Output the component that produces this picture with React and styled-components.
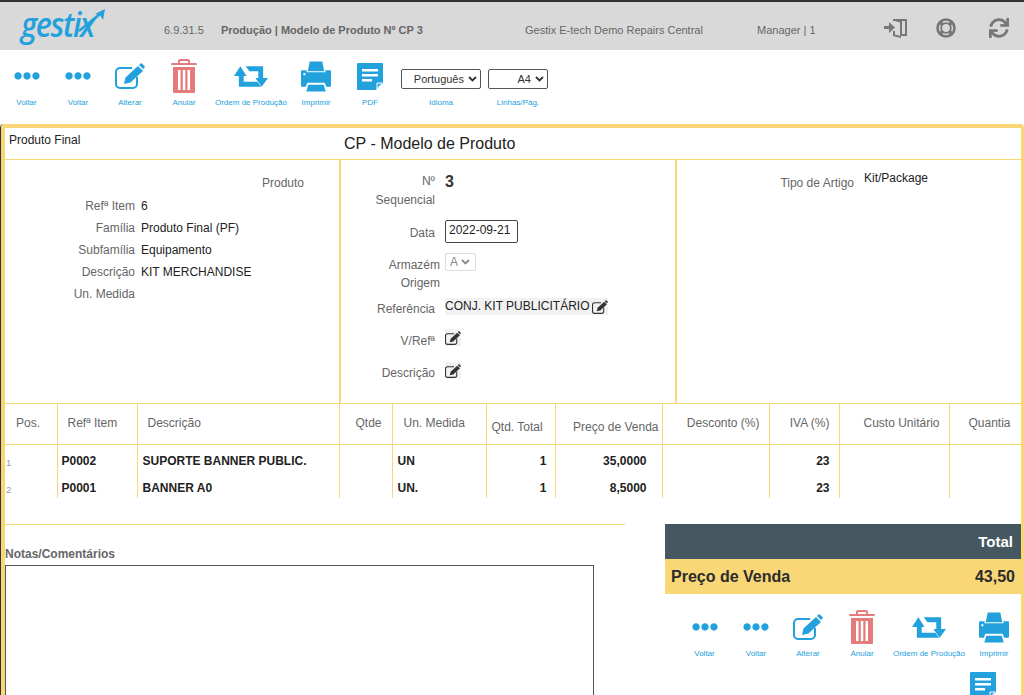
import React from "react";
import styled, { createGlobalStyle } from "styled-components";
import { FaEllipsisH, FaSync } from "react-icons/fa";

const Global = createGlobalStyle`
  html, body { margin: 0; padding: 0; height: 695px; overflow: hidden; background: #fff; }
  body { font-family: "Liberation Sans", Arial, sans-serif; color: #222; }
`;
const Page = styled.div`width: 1024px; height: 695px; overflow: hidden; display: flex; flex-direction: column;`;
const Header = styled.header`
  height: 48px; flex: none; border-top: 2px solid #333; background: #d9d9d9;
  display: flex; align-items: center; color: #666; font-size: 11px; position: relative;
`;
const Logo = styled.div`
  width: 164px; flex: none; padding-left: 21px; box-sizing: border-box; position: relative; height: 48px;
`;
const LogoText = styled.span`
  display: block; font: italic 600 35px/44px "Open Sans", sans-serif; letter-spacing: -1.5px; color: #22a1dc;
  transform: scaleX(.87); transform-origin: left;
`;
const LogoArrow = styled.svg`position: absolute; left: 78px; top: 6px;`;
const Version = styled.span`width: 57px; flex: none; padding-top: 7px;`;
const Title = styled.b`width: 304px; flex: none; padding-top: 7px; color: #666;`;
const Company = styled.span`width: 232px; flex: none; padding-top: 7px;`;
const User = styled.span`width: 127px; flex: none; padding-top: 7px;`;
const HeaderIcons = styled.div`display: flex; align-items: center; gap: 29px; color: #777; padding-top: 4px;`;
const SyncIcon = styled(FaSync)`margin-left: 4px;`;
const Toolbar = styled.div`
  height: ${p => p.$h || 74}px; flex: none; display: flex; align-items: flex-start;
  padding-left: ${p => p.$left || 0}px; margin-top: ${p => p.$top || 0}px; box-sizing: border-box;
`;
const Tool = styled.div`
  width: ${p => p.$w}px; flex: none; display: flex; flex-direction: column; align-items: center;
  color: #22a1dc; font-size: 8px;
`;
const IconSlot = styled.div`height: 34px; margin-top: 9px; margin-bottom: 2px; display: flex; align-items: center; justify-content: center;`;
const ToolLabel = styled.span`margin-top: 3px; white-space: nowrap; line-height: 10px;`;
const SelectBox = styled.div`
  width: ${p => p.$w}px; height: 20px; box-sizing: border-box; border: 1px solid #555; border-radius: 2px;
  display: flex; align-items: center; justify-content: flex-end; gap: 4px; padding-right: 3px;
  color: #333; font-size: 11px;
`;
const SelectCol = styled.div`
  width: ${p => p.$w}px; flex: none; display: flex; flex-direction: column; align-items: center; color: #22a1dc; font-size: 8px;
  margin-left: ${p => p.$ml || 0}px; padding-top: 19px;
`;
const SelectLabel = styled.span`margin-top: 9px; line-height: 10px;`;
const Panel = styled.main`
  flex: 1; border: solid #f9d777; border-width: 4px 3px 0 4px; border-radius: 4px 4px 0 0;
  box-shadow: -1px 0 0 #333; margin-left: 1px; min-height: 0; overflow: hidden;
`;
const TitleRow = styled.div`height: 31px; border-bottom: 1px solid #f9d777; display: flex;`;
const FinalTag = styled.span`font-size: 12px; padding: 5px 0 0 4px; width: 339px; box-sizing: border-box; flex: none; color: #222;`;
const DocTitle = styled.h1`margin: 0; font-size: 16px; font-weight: 400; line-height: 32px; color: #222;`;
const Columns = styled.div`display: flex; height: 243px; border-bottom: 1px solid #f9d777;`;
const Col = styled.section`
  box-sizing: border-box; width: ${p => p.$w}px; flex: none; border-right: ${p => p.$last ? 0 : "2px solid #f9d777"};
`;
const FormList = styled.div`padding-top: ${p => p.$top}px; display: flex; flex-direction: column;`;
const Field = styled.div`
  display: flex; height: ${p => p.$h || 22}px; font-size: 12px; line-height: 22px;
`;
const Label = styled.span`
  width: ${p => p.$w}px; flex: none; text-align: right; color: #666;
  padding-right: ${p => p.$pr ?? 6}px; box-sizing: border-box; line-height: ${p => p.$lh || 22}px; padding-top: ${p => p.$pt || 0}px;
`;
const Value = styled.span`color: #222; white-space: nowrap;`;
const TypeValue = styled(Value)`margin: -5px 0 0 4px;`;
const Seq = styled.b`font-size: 16px; color: #333; line-height: 18px; margin-top: 1px;`;
const DateBox = styled.div`
  width: 73px; height: 23px; box-sizing: border-box; border: 1px solid #444; border-radius: 2px;
  font-size: 12px; line-height: 19px; padding-left: 3px; color: #222; margin-top: 1px;
`;
const MiniSelect = styled.div`
  width: 31px; height: 18px; box-sizing: border-box; border: 1px solid #ddd; border-radius: 2px; color: #888; margin-top: 1px;
  display: flex; align-items: center; gap: 3px; padding-left: 4px; font-size: 12px;
`;
const Shade = styled.div`
  display: inline-flex; align-items: center; background: #f2f2f2; height: 17px; gap: 3px; color: #222; font-size: 12px; line-height: 17px;
`;
const Table = styled.table`
  border-collapse: collapse; table-layout: fixed; width: 1016px; font-size: 12px;
`;
const Th = styled.th`
  font-weight: 400; color: #666; height: 40px; box-sizing: border-box;
  padding: ${p => p.$low ? "6px" : "0"} ${p => p.$pr ?? 9}px ${p => p.$low ? "0" : "2px"} ${p => p.$pl ?? 0}px;
  border: solid #f9d777; border-width: 0 1px 1px 0;
  text-align: ${p => p.$a || "left"}; white-space: nowrap; vertical-align: middle;
`;
const Td = styled.td`
  font-weight: 700; color: #222; height: 27px; box-sizing: border-box;
  padding: 6px ${p => p.$pr ?? 4}px 0 ${p => p.$pl ?? 4}px; border-right: 1px solid #f9d777;
  text-align: ${p => p.$a || "left"}; white-space: nowrap;
`;
const PosCell = styled.td`
  font-size: 9.500px; color: #999; height: 27px; padding: 10px 0 0 1px; border-right: 1px solid #f9d777; box-sizing: border-box;
`;
const Bottom = styled.div`display: flex; justify-content: space-between; margin-top: 26px; align-items: flex-start;`;
const Notes = styled.div`width: 620px; flex: none; border-top: 1px solid #f9d777; padding-top: 22px;`;
const NotesLabel = styled.div`font-size: 12px; font-weight: 700; color: #666; line-height: 14px;`;
const NotesBox = styled.div`width: 589px; height: 200px; box-sizing: border-box; border: 1px solid #555; margin-top: 4px;`;
const Side = styled.div`width: 356px; flex: none;`;
const TotalHead = styled.div`
  height: 35px; background: #455760; color: #fff; font-weight: 700; font-size: 15px; display: flex; align-items: center; justify-content: flex-end; padding-right: 8px;
`;
const TotalRow = styled.div`
  height: 35px; background: #f9d777; color: #2b2b2b; font-weight: 700; font-size: 16px; display: flex; align-items: center; justify-content: space-between; padding: 0 6px;
`;
const PdfRow = styled.div`display: flex; justify-content: flex-end; padding-right: 25px;`;

const Blue = "#22a1dc";
const Dots = () => <FaEllipsisH size={26} color={Blue} />;
const Edit = ({ w = 30, h = 26, color = Blue }) => (
  <svg width={w} height={h} viewBox="0 0 30 26" fill={color}>
    <path d="M17 5H5a4 4 0 0 0-4 4v12a4 4 0 0 0 4 4h13a4 4 0 0 0 4-4v-7" fill="none" stroke={color} strokeWidth="2" />
    <path d="M9 21l1.500-6.500L23 3l5 5L15.500 19.500z" />
    <path d="M24 2l1.500-1.500a1 1 0 0 1 1.400 0l2.600 2.600a1 1 0 0 1 0 1.400L28 6z" />
  </svg>
);
const Trash = () => (
  <svg width="26" height="34" viewBox="0 0 26 34" fill="#e57b7b">
    <path d="M9 0h8a2 2 0 0 1 2 2v2h6a1 1 0 0 1 0 2H1a1 1 0 0 1 0-2h6V2a2 2 0 0 1 2-2zm0 2v2h8V2z" fillRule="evenodd" />
    <path d="M2 8h22v25a1 1 0 0 1-1 1H3a1 1 0 0 1-1-1zm5 3v20h2.500V11zm4.800 0v20h2.500V11zm4.700 0v20h2.500V11z" fillRule="evenodd" />
  </svg>
);
const Retweet = () => (
  <svg width="34" height="21" viewBox="0 0 35 21" fill={Blue}>
    <path d="M6.500 0L13 10H10V16H24L28 21H5V10H0Z" />
    <path d="M12 0H30V12H35L28.500 21L22 12H25V5H16Z" />
  </svg>
);
const Printer = () => (
  <svg width="30" height="31" viewBox="0 0 31 31" fill={Blue}>
    <path d="M9 0h13l2 10H7z" />
    <path fillRule="evenodd" d="M1 9h5l-.5 2h20l-.5-2h5a1 1 0 0 1 1 1v15a1 1 0 0 1-1 1h-4l-1.500-4H6.500L5 26H1a1 1 0 0 1-1-1V10a1 1 0 0 1 1-1zm2.500 3a1.200 1.200 0 1 0 0 2.400 1.200 1.200 0 0 0 0-2.400z" />
    <path d="M7.500 24h16l2 7H5.500z" />
  </svg>
);
const Doc = () => (
  <svg width="26" height="27" viewBox="0 0 26 27">
    <path d="M1 0h24a1 1 0 0 1 1 1v19l-7 7H1a1 1 0 0 1-1-1V1a1 1 0 0 1 1-1z" fill={Blue} />
    <path d="M5 6h16v2.500H5zM5 11h16v2.500H5zM5 16h10v2.500H5z" fill="#fff" />
    <path d="M25 20h-5v6z" fill={Blue} stroke="#fff" strokeWidth="1" />
  </svg>
);
const Door = () => (
  <svg width="23" height="20" viewBox="0 0 23 20" fill="#777">
    <path d="M0 8h5V4l6 5.500-6 5.500v-4H0z" />
    <path d="M9 1h14v17h-6v2l-8-2v-5h2v3.500l5 1.200V4.500L11 3H9zM18 3v13h3V3z" fillRule="evenodd" />
  </svg>
);
const Ring = () => (
  <svg width="20" height="20" viewBox="0 0 20 20" fill="none" stroke="#777">
    <circle cx="10" cy="10" r="8.500" strokeWidth="2.600" />
    <circle cx="10" cy="10" r="4.800" strokeWidth="1.800" />
    <path d="M4 4l3 3M16 4l-3 3M4 16l3-3M16 16l-3-3" strokeWidth="3.500" />
  </svg>
);
const Chevron = ({ w = 9, c = "#333" }) => (
  <svg width={w} height="6" viewBox="0 0 9 6"><path d="M1 1l3.500 3.500L8 1" fill="none" stroke={c} strokeWidth="1.800" /></svg>
);
const Arrow = () => (
  <LogoArrow width="30" height="26" viewBox="0 0 30 26">
    <path d="M1 23 L22 6" stroke={Blue} strokeWidth="2.500" fill="none" />
    <path d="M27 1l-2 11-3-5-5-1z" fill={Blue} />
  </LogoArrow>
);

const tools = [
  [51, <Dots />, "Voltar"], [52, <Dots />, "Voltar"], [52, <Edit />, "Alterar"],
  [56, <Trash />, "Anular"], [78, <Retweet />, "Ordem de Produção"],
  [52, <Printer />, "Imprimir"],
];
const ToolItems = ({ list }) => list.map(([w, icon, label], i) => (
  <Tool key={i} $w={w}><IconSlot>{icon}</IconSlot><ToolLabel>{label}</ToolLabel></Tool>
));

const cols = [52, 80, 202, 53, 94, 69, 107, 107, 70, 110, 72];
const heads = [
  ["Pos.", { $pl: 11 }], ["Refª Item", { $pl: 10 }], ["Descrição", { $pl: 10 }], ["Qtde", { $a: "right", $pr: 10 }], ["Un. Medida", { $pl: 11 }],
  ["Qtd. Total", { $low: true, $pl: 5 }], ["Preço de Venda", { $low: true, $a: "right", $pr: 3 }], ["Desconto (%)", { $a: "right" }],
  ["IVA (%)", { $a: "right" }], ["Custo Unitário", { $a: "right" }], ["Quantia", { $a: "right", $pr: 10 }],
];
const rows = [
  ["1", "P0002", "SUPORTE BANNER PUBLIC.", "UN", "1", "35,0000", "23"],
  ["2", "P0001", "BANNER A0", "UN.", "1", "8,5000", "23"],
];

export default function App() {
  return (
    <Page>
      <Global />
      <Header>
        <Logo><LogoText>gestix</LogoText><Arrow /></Logo>
        <Version>6.9.31.5</Version>
        <Title>Produção | Modelo de Produto Nº CP 3</Title>
        <Company>Gestix E-tech Demo Repairs Central</Company>
        <User>Manager | 1</User>
        <HeaderIcons><Door /><Ring /><SyncIcon size={20} /></HeaderIcons>
      </Header>
      <Toolbar $left={1}>
        <ToolItems list={tools} />
        <Tool $w={56}><IconSlot><Doc /></IconSlot><ToolLabel>PDF</ToolLabel></Tool>
        <SelectCol $w={80} $ml={3}><SelectBox $w={80}>Português <Chevron /></SelectBox><SelectLabel>Idioma</SelectLabel></SelectCol>
        <SelectCol $w={60} $ml={7}><SelectBox $w={60}>A4 <Chevron /></SelectBox><SelectLabel>Linhas/Pág.</SelectLabel></SelectCol>
      </Toolbar>
      <Panel>
        <TitleRow><FinalTag>Produto Final</FinalTag><DocTitle>CP - Modelo de Produto</DocTitle></TitleRow>
        <Columns>
          <Col $w={336}>
            <FormList $top={12}>
              <Field $h={23}><Label $w={299} $pr={0}>Produto</Label></Field>
              <Field><Label $w={136}>Refª Item</Label><Value>6</Value></Field>
              <Field><Label $w={136}>Família</Label><Value>Produto Final (PF)</Value></Field>
              <Field><Label $w={136}>Subfamília</Label><Value>Equipamento</Value></Field>
              <Field><Label $w={136}>Descrição</Label><Value>KIT MERCHANDISE</Value></Field>
              <Field><Label $w={136}>Un. Medida</Label></Field>
            </FormList>
          </Col>
          <Col $w={336}>
            <FormList $top={12}>
              <Field $h={47}><Label $w={104} $pr={10} $lh={19}>Nº<br />Sequencial</Label><Seq>3</Seq></Field>
              <Field $h={33}><Label $w={104} $pr={10} $pt={3}>Data</Label><DateBox>2022-09-21</DateBox></Field>
              <Field $h={46}><Label $w={104} $pr={5} $lh={18} $pt={4}>Armazém<br />Origem</Label><MiniSelect>A <Chevron c="#888" /></MiniSelect></Field>
              <Field $h={31}><Label $w={104} $pr={10}>Referência</Label><Shade>CONJ. KIT PUBLICITÁRIO <Edit w={16} h={14} color="#333" /></Shade></Field>
              <Field $h={33}><Label $w={104} $pr={10} $pt={1}>V/Refª</Label><Shade><Edit w={16} h={14} color="#333" /></Shade></Field>
              <Field $h={32}><Label $w={104} $pr={10}>Descrição</Label><Shade><Edit w={16} h={14} color="#333" /></Shade></Field>
            </FormList>
          </Col>
          <Col $w={345} $last>
            <FormList $top={12}>
              <Field><Label $w={183}>Tipo de Artigo</Label><TypeValue>Kit/Package</TypeValue></Field>
            </FormList>
          </Col>
        </Columns>
        <Table>
          <colgroup>{cols.map((w, i) => <col key={i} style={{ width: w }} />)}</colgroup>
          <thead><tr>{heads.map(([t, p]) => <Th key={t} {...p}>{t}</Th>)}</tr></thead>
          <tbody>
            {rows.map(r => (
              <tr key={r[0]}>
                <PosCell>{r[0]}</PosCell><Td>{r[1]}</Td><Td $pl={5}>{r[2]}</Td><Td /><Td $pl={5}>{r[3]}</Td>
                <Td $a="right" $pr={8}>{r[4]}</Td><Td $a="right" $pr={15}>{r[5]}</Td><Td /><Td $a="right" $pr={9}>{r[6]}</Td><Td /><Td />
              </tr>
            ))}
          </tbody>
        </Table>
        <Bottom>
          <Notes><NotesLabel>Notas/Comentários</NotesLabel><NotesBox /></Notes>
          <Side>
            <TotalHead>Total</TotalHead>
            <TotalRow><span>Preço de Venda</span><span>43,50</span></TotalRow>
            <Toolbar $left={14} $h={71} $top={7}><ToolItems list={tools} /></Toolbar>
            <PdfRow><Doc /></PdfRow>
          </Side>
        </Bottom>
      </Panel>
    </Page>
  );
}
